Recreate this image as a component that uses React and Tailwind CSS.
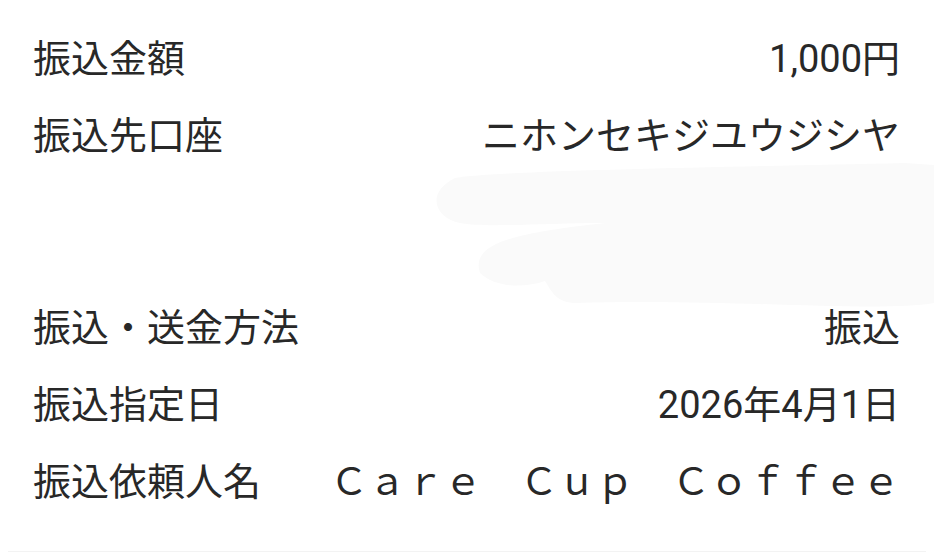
// Transfer confirmation detail rows
const rows = [
  { label: "振込金額", value: "1,000円" },
  { label: "振込先口座", value: "ニホンセキジユウジシヤ" },
  { spacer: true },
  { label: "振込・送金方法", value: "振込" },
  { label: "振込指定日", value: "2026年4月1日" },
  { label: "振込依頼人名", value: "Ｃａｒｅ　Ｃｕｐ　Ｃｏｆｆｅｅ" },
];

function Smear() {
  return (
    <svg
      className="pointer-events-none absolute left-[425px] top-[163px] h-[146px] w-[509px]"
      viewBox="0 0 509 146"
      fill="#fafafa"
    >
      <path d="M30 15 C60 8 300 4 480 0 L509 2 L509 140 C450 150 300 135 150 140 C130 140 125 125 120 118 C100 125 70 125 55 110 C45 80 90 70 180 60 C120 60 60 65 35 60 C10 55 0 30 30 15 Z" />
    </svg>
  );
}

export default function App() {
  return (
    <div className="relative h-[553px] w-[934px] overflow-hidden bg-white font-['Roboto','Noto_Sans_CJK_JP',sans-serif] text-[38px] text-[#282828]">
      <Smear />
      <div className="relative flex flex-col pt-[20px]">
        {rows.map((row, i) =>
          row.spacer ? (
            <div key={i} className="h-[115px]" />
          ) : (
            <div key={i} className="flex h-[77px] items-center justify-between pl-[33px] pr-[34px] leading-none">
              <span>{row.label}</span>
              <span className="whitespace-pre">{row.value}</span>
            </div>
          )
        )}
      </div>
      <div className="mx-[8px] mt-[31px] border-b border-[#f3f3f3]" />
    </div>
  );
}
